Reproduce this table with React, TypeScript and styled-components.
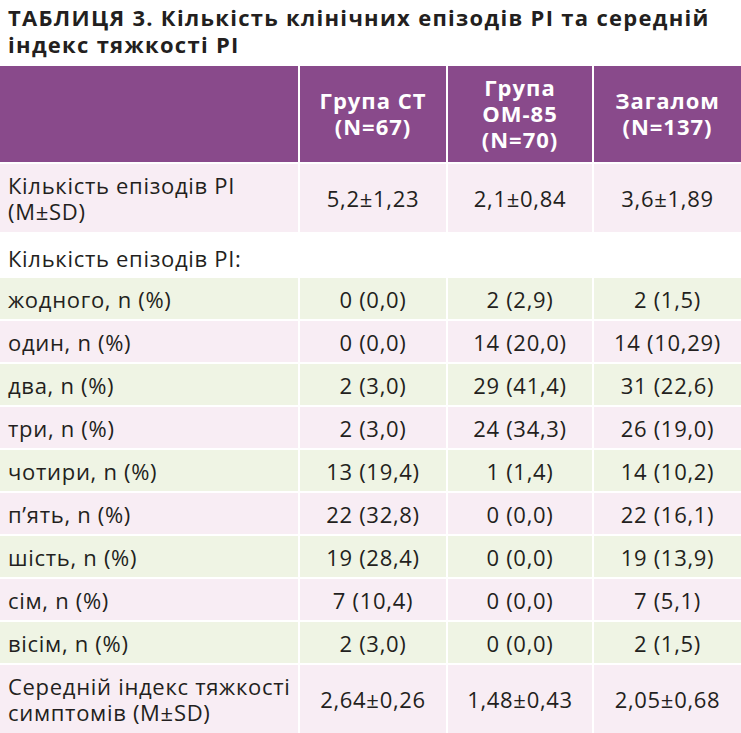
import React from "react";
import styled, { createGlobalStyle } from "styled-components";

const Global = createGlobalStyle`
  html, body { margin: 0; padding: 0; background: #ffffff; }
  body { font-family: "Open Sans", "Noto Sans", sans-serif; color: #231f20; }
`;

const Page = styled.div`
  width: 741px;
`;

const Title = styled.h1`
  margin: 0;
  padding: 4px 8px 0 8px;
  height: 66px;
  box-sizing: border-box;
  font-size: 22px;
  line-height: 27px;
  font-weight: 700;
  letter-spacing: 1.3px;
  color: #231f20;
`;

const Table = styled.div`
  display: grid;
  grid-template-columns: 298px 146px 144px 1fr;
  column-gap: 2px;
  row-gap: 2px;
  background: #ffffff;
`;

type Tone = "head" | "pink" | "green" | "white";

const bg: Record<Tone, string> = {
  head: "#894a8b",
  pink: "#f8edf4",
  green: "#eff4e4",
  white: "#ffffff",
};

const pad: Record<Tone, string> = {
  head: "0 8px 3px",
  pink: "0 8px",
  green: "0 8px",
  white: "5px 8px 0",
};

const Cell = styled.div<{ $tone: Tone; $h: number; $align?: "left" | "center"; $span?: number }>`
  background: ${(p) => bg[p.$tone]};
  height: ${(p) => p.$h}px;
  display: flex;
  align-items: center;
  justify-content: ${(p) => (p.$align === "left" ? "flex-start" : "center")};
  text-align: ${(p) => (p.$align === "left" ? "left" : "center")};
  padding: ${(p) => pad[p.$tone]};
  box-sizing: border-box;
  font-size: 22px;
  line-height: 26px;
  white-space: nowrap;
  letter-spacing: ${(p) => (p.$tone === "head" ? "1px" : "0.7px")};
  color: ${(p) => (p.$tone === "head" ? "#ffffff" : "#231f20")};
  font-weight: ${(p) => (p.$tone === "head" ? 700 : 400)};
  grid-column: ${(p) => (p.$span ? `span ${p.$span}` : "auto")};
`;

const rows: [string, string, string, string][] = [
  ["жодного, n (%)", "0 (0,0)", "2 (2,9)", "2 (1,5)"],
  ["один, n (%)", "0 (0,0)", "14 (20,0)", "14 (10,29)"],
  ["два, n (%)", "2 (3,0)", "29 (41,4)", "31 (22,6)"],
  ["три, n (%)", "2 (3,0)", "24 (34,3)", "26 (19,0)"],
  ["чотири, n (%)", "13 (19,4)", "1 (1,4)", "14 (10,2)"],
  ["п’ять, n (%)", "22 (32,8)", "0 (0,0)", "22 (16,1)"],
  ["шість, n (%)", "19 (28,4)", "0 (0,0)", "19 (13,9)"],
  ["сім, n (%)", "7 (10,4)", "0 (0,0)", "7 (5,1)"],
  ["вісім, n (%)", "2 (3,0)", "0 (0,0)", "2 (1,5)"],
];

export default function App() {
  return (
    <Page>
      <Global />
      <Title>
        ТАБЛИЦЯ 3. Кількість клінічних епізодів РІ та середній індекс тяжкості РІ
      </Title>
      <Table>
        <Cell $tone="head" $h={96} />
        <Cell $tone="head" $h={96}>Група СТ<br />(N=67)</Cell>
        <Cell $tone="head" $h={96}>Група<br />ОМ-85<br />(N=70)</Cell>
        <Cell $tone="head" $h={96}>Загалом<br />(N=137)</Cell>

        <Cell $tone="pink" $h={68} $align="left">Кількість епізодів РІ<br />(M±SD)</Cell>
        <Cell $tone="pink" $h={68}>5,2±1,23</Cell>
        <Cell $tone="pink" $h={68}>2,1±0,84</Cell>
        <Cell $tone="pink" $h={68}>3,6±1,89</Cell>

        <Cell $tone="white" $h={42} $align="left" $span={4}>Кількість епізодів РІ:</Cell>

        {rows.map((r, i) => {
          const tone: Tone = i % 2 === 0 ? "green" : "pink";
          return (
            <React.Fragment key={r[0]}>
              <Cell $tone={tone} $h={41} $align="left">{r[0]}</Cell>
              <Cell $tone={tone} $h={41}>{r[1]}</Cell>
              <Cell $tone={tone} $h={41}>{r[2]}</Cell>
              <Cell $tone={tone} $h={41}>{r[3]}</Cell>
            </React.Fragment>
          );
        })}

        <Cell $tone="pink" $h={68} $align="left">Середній індекс тяжкості<br />симптомів (M±SD)</Cell>
        <Cell $tone="pink" $h={68}>2,64±0,26</Cell>
        <Cell $tone="pink" $h={68}>1,48±0,43</Cell>
        <Cell $tone="pink" $h={68}>2,05±0,68</Cell>
      </Table>
    </Page>
  );
}
